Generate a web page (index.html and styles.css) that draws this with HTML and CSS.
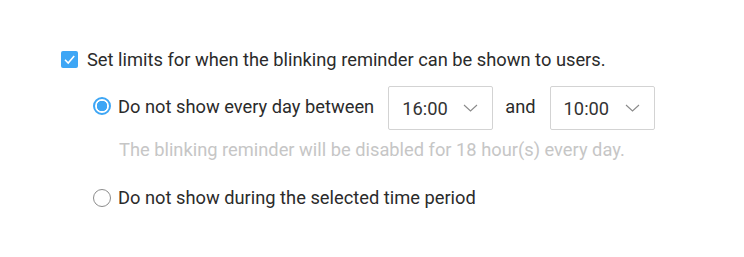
FILE: index.html
```html
<!DOCTYPE html>
<html lang="en">
<head>
    <meta charset="UTF-8">
    <meta name="viewport" content="width=device-width, initial-scale=1.0">
    <title>Blinking Reminder Limits</title>
    <link rel="stylesheet" href="styles.css">
</head>
<body>
    <!-- Reminder limits -->
    <div class="limits">
        <label class="check-row">
            <span class="check-box">
                <svg width="13" height="13" viewBox="0 0 13 13"><path d="M2 6.8 L5.2 10 L11.2 3" fill="none" stroke="#fff" stroke-width="1.6"/></svg>
            </span>
            <span class="label-text">Set limits for when the blinking reminder can be shown to users.</span>
        </label>

        <div class="options">
            <div class="option-row">
                <span class="radio checked"></span>
                <span class="label-text">Do not show every day between</span>
                <div class="time-select">
                    <span>16:00</span>
                    <svg width="15" height="8" viewBox="0 0 15 8"><path d="M1 1 L7.5 7 L14 1" fill="none" stroke="#8a8a8a" stroke-width="1.1"/></svg>
                </div>
                <span class="label-text and">and</span>
                <div class="time-select">
                    <span>10:00</span>
                    <svg width="15" height="8" viewBox="0 0 15 8"><path d="M1 1 L7.5 7 L14 1" fill="none" stroke="#8a8a8a" stroke-width="1.1"/></svg>
                </div>
            </div>
            <p class="hint">The blinking reminder will be disabled for 18 hour(s) every day.</p>

            <div class="option-row second">
                <span class="radio"></span>
                <span class="label-text">Do not show during the selected time period</span>
            </div>
        </div>
    </div>
</body>
</html>
```

FILE: styles.css
```css
/* General Styles */
body {
    margin: 0;
    background: #fff;
    font-family: Roboto, sans-serif;
    font-size: 18.3px;
    color: #2b2b2b;
}

.limits {
    padding: 50px 0 0 61px;
}

.label-text {
    white-space: nowrap;
}

/* Checkbox */
.check-row {
    display: flex;
    align-items: center;
    gap: 9px;
    height: 18px;
}

.check-box {
    width: 17px;
    height: 17px;
    border-radius: 2px;
    background-color: #3ea6f5;
    display: flex;
    align-items: center;
    justify-content: center;
}

/* Radio options */
.options {
    margin-left: 32px;
    margin-top: 14px;
}

.option-row {
    display: flex;
    align-items: center;
}

.radio {
    width: 18px;
    height: 18px;
    box-sizing: border-box;
    border: 1px solid #8c8c8c;
    border-radius: 50%;
    margin-right: 7px;
    flex-shrink: 0;
}

.radio.checked {
    border: 2px solid #3ea6f5;
    background: radial-gradient(circle, #3ea6f5 0 5px, #fff 5.5px);
}

.time-select {
    width: 105px;
    height: 44px;
    box-sizing: border-box;
    border: 1px solid #d3d3d3;
    border-radius: 2px;
    display: flex;
    align-items: center;
    justify-content: space-between;
    padding: 0 14px 0 13px;
    margin-left: 14px;
    color: #333;
    margin-top: 4px;
}

.and {
    margin: 0 0 0 12px;
}

.hint {
    margin: 9px 0 0 26px;
    color: #c6c6c6;
    white-space: nowrap;
}

.option-row.second {
    margin-top: 27px;
}
```
